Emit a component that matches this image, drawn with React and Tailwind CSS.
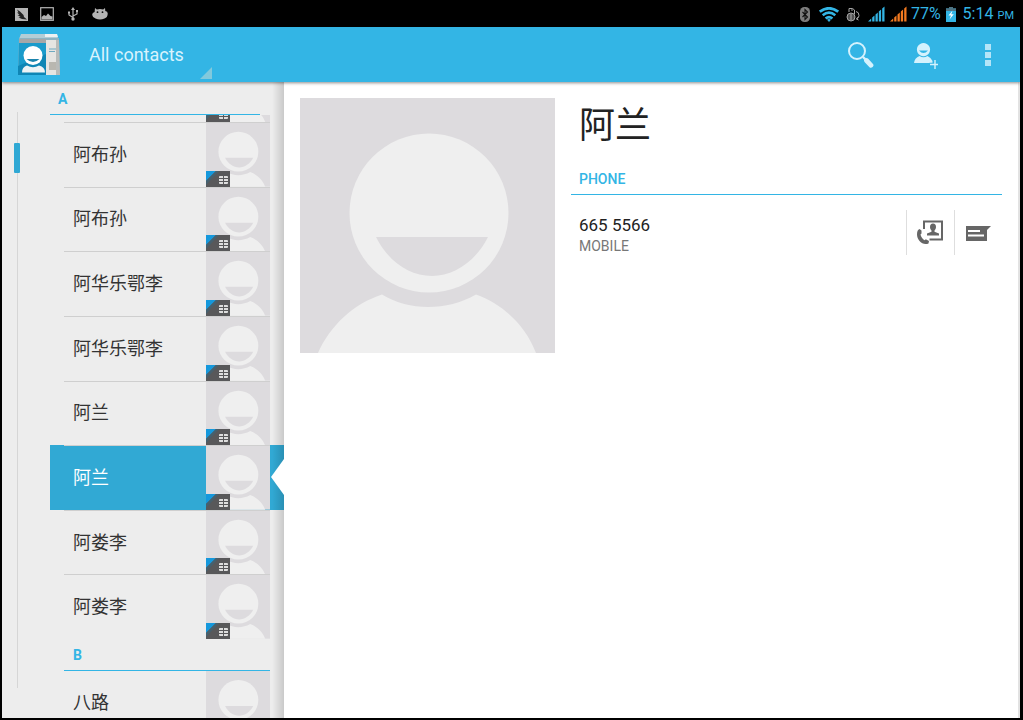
import { useState } from "react";

const groups = [
  {
    letter: "A",
    contacts: [
      { id: 1, name: "阿布孙" },
      { id: 2, name: "阿布孙" },
      { id: 3, name: "阿华乐鄂李" },
      { id: 4, name: "阿华乐鄂李" },
      { id: 5, name: "阿兰" },
      { id: 6, name: "阿兰" },
      { id: 7, name: "阿娄李" },
      { id: 8, name: "阿娄李" },
    ],
  },
  {
    letter: "B",
    contacts: [{ id: 9, name: "八路" }],
  },
];

function Avatar({ className }) {
  return (
    <svg
      viewBox="0 0 255 255"
      preserveAspectRatio="none"
      className={className}
      aria-hidden="true"
    >
      <rect width="255" height="255" fill="#dddbde" />
      <circle cx="129" cy="115" r="79.5" fill="#efefef" />
      <path d="M76 139H188C176 163 154 178 132 178C109 178 88 163 76 139Z" fill="#dddbde" />
      <path
        d="M18 255C30 228 53 206 82 196.500C96 205 112 209 128 209C145 209 161 205 176 196.500C203 206 226 228 236 255Z"
        fill="#efefef"
      />
    </svg>
  );
}

function SimBadge() {
  return (
    <svg
      viewBox="0 0 24 16"
      className="absolute bottom-0 left-0 h-4 w-6"
      aria-hidden="true"
    >
      <rect width="24" height="16" fill="#58585a" />
      <path d="M0 0H10L0 10Z" fill="#1598dc" />
      <path d="M10 0H13L0 14V10Z" fill="#46606e" />
      <rect x="13" y="5" width="9" height="8" rx="1" fill="#dedede" />
      <path d="M17.500 5V13M13 7.500H22M13 10.500H22" stroke="#58585a" strokeWidth="1" />
    </svg>
  );
}

function ContactPhoto() {
  return (
    <div className="relative h-full w-16 shrink-0">
      <Avatar className="h-full w-full" />
      <SimBadge />
    </div>
  );
}

function SignalIcon({ className }) {
  return (
    <svg viewBox="0 0 17 16" className={className} fill="currentColor" aria-hidden="true">
      <path d="M0 15.500L3.200 12.500V15.500ZM4.200 11.500L6.500 9.500V15.500H4.200ZM7.500 8.500L9.800 6.500V15.500H7.500ZM10.800 5.500L13.100 3.500V15.500H10.800ZM14.200 2.500L16.500 .5V15.500H14.200Z" />
    </svg>
  );
}

function StatusBar() {
  return (
    <div className="flex h-[27px] shrink-0 items-center justify-between bg-black pt-px pr-[9px] pl-[15px] text-[#33b5e5]">
      <div className="flex items-center gap-3 text-[#b4b4b4]">
        <svg viewBox="0 0 13 13" className="h-[13px] w-[13px]" aria-hidden="true">
          <rect width="13" height="13" fill="currentColor" />
          <path d="M2 1.500L5 3.500L8.500 7L9 9L12 11.500L7 11L3.500 9.500L5.500 9L2.500 7L4.500 6.800L2 4.500L3.500 4.500Z" fill="#222" />
        </svg>
        <svg viewBox="0 0 14 14" className="h-[14px] w-[14px]" aria-hidden="true">
          <rect x=".7" y=".7" width="12.600" height="12.600" fill="none" stroke="currentColor" strokeWidth="1.200" />
          <path d="M1.500 12.500V10L4 8L6 9L8 6.500L10.500 9L12.500 9.500V12.500Z" fill="currentColor" />
        </svg>
        <svg viewBox="0 0 14 14" className="h-[14px] w-[14px]" fill="none" stroke="currentColor" strokeWidth="1.200" aria-hidden="true">
          <path d="M7 2V12M7 10.500L3 8V6M7 9L11 7V4.500" />
          <path d="M7 0L9 3H5ZM2 4.500H4V6.500H2ZM10 3H12V5H10Z" fill="currentColor" stroke="none" />
          <circle cx="7" cy="12" r="1.700" fill="currentColor" stroke="none" />
        </svg>
        <svg viewBox="0 0 16 12" className="h-3 w-4" aria-hidden="true">
          <path
            d="M3 0L4.800 1.500Q8 .5 11.200 1.500L13 0L13.300 3Q16 3.500 15.700 6Q15.500 9.500 12.500 10.500Q8 12.500 3.500 10.500Q.5 9.500 .2 7Q0 4.500 2.600 4Z"
            fill="currentColor"
          />
          <circle cx="5.500" cy="4.200" r=".9" fill="#111" />
          <circle cx="10.500" cy="4.200" r=".9" fill="#111" />
        </svg>
      </div>

      <div className="flex items-center">
        <svg viewBox="0 0 10 15" className="h-[15px] w-[10px]" aria-hidden="true">
          <rect width="10" height="15" rx="4.500" fill="#7d7d7d" />
          <path d="M2.500 5L7.500 10L5 12.500V2.500L7.500 5L2.500 10" fill="none" stroke="#111" strokeWidth="1.100" />
        </svg>
        <svg viewBox="0 0 20 15" className="ml-[9px] h-[15px] w-5" fill="none" stroke="currentColor" strokeWidth="2.700" aria-hidden="true">
          <path d="M.8 4.700Q10-2.200 19.200 4.700M3.700 8.200Q10 3.200 16.300 8.200M6.600 11.500Q10 8.600 13.400 11.500" />
          <path d="M8 12.700Q10 11.500 12 12.700L10 15Z" fill="currentColor" stroke="none" />
        </svg>
        <svg viewBox="0 0 14 15" className="ml-[7px] h-[15px] w-[14px]" fill="none" stroke="#a5a5a5" strokeWidth="1" aria-hidden="true">
          <path d="M3 5V1.500H6.500L8.500 3V7M5 3H7" />
          <circle cx="5" cy="10" r="4" />
          <path d="M1 10H9M5 6V14M2 8H8M2 12H8M10 4.500Q13 5 13 8.500Q13 11 10.500 12M12 10L10.500 12L12.500 13" />
        </svg>
        <SignalIcon className="ml-2 h-4 w-[17px]" />
        <SignalIcon className="ml-[5px] h-4 w-[17px] text-[#f47a20]" />
        <span className="ml-1 text-base leading-6">77%</span>
        <svg viewBox="0 0 10 15" className="ml-[5px] h-[15px] w-[10px]" aria-hidden="true">
          <path d="M3 0H7V1.500H10V15H0V1.500H3Z" fill="currentColor" />
          <path d="M3 0H7V1.500H10V4H0V1.500H3Z" fill="#4e7484" />
          <path d="M6.500 3.500L2.500 8.500H5L3.500 12.500L7.800 7.300H5.300Z" fill="#fff" />
        </svg>
        <span className="ml-[7px] flex items-baseline gap-1 text-base leading-6">
          5:14 <span className="text-[11px] leading-4">PM</span>
        </span>
      </div>
    </div>
  );
}

function AppLogo() {
  return (
    <svg viewBox="0 0 42 42" className="h-[42px] w-[42px]" role="img" aria-label="People">
      <path d="M3 0H39L40 5H1Z" fill="#b4cdd6" />
      <path d="M27 0H39L40 3H27Z" fill="#eef1f2" />
      <path d="M1 4H41L42 41H0Z" fill="#8fb3c1" />
      <rect x="1" y="5" width="27" height="4" fill="#a5a7a8" />
      <path d="M28 6H38V41H28Z" fill="#e6e5e2" />
      <path d="M38 6H41L42 41H38Z" fill="#b9bbb9" />
      <path d="M31 15H38M31 17.500H37" stroke="#6fa9c0" strokeWidth="1.200" />
      <rect x="31" y="28" width="7" height="8" fill="#b9b7b0" />
      <path d="M1 9H28V41H0Z" fill="#1a9bcb" />
      <path d="M0 41V32L28 20V41Z" fill="#0f86b5" />
      <circle cx="15" cy="21.500" r="9.500" fill="#fff" />
      <path d="M8.500 25H21.500Q15 31 8.500 25Z" fill="#1b84ad" />
      <path d="M4 38.500Q4 33 9 31.500Q15 35 21 31.500Q27 33 27 38.500Z" fill="#eef3f5" />
    </svg>
  );
}

function ActionBar() {
  return (
    <header className="relative z-20 flex h-[55px] shrink-0 items-center bg-[#33b5e5] pl-4 shadow-[0_1px_3px_rgba(0,0,0,0.45)]">
      <AppLogo />

      <div className="relative ml-3 h-12 w-[140px]">
        <select
          aria-label="Contact filter"
          className="h-full w-full appearance-none bg-transparent pl-[17px] text-lg text-[#d9f3fd] outline-none"
        >
          <option>All contacts</option>
          <option>Favorites</option>
        </select>
        <svg
          viewBox="0 0 12 12"
          className="pointer-events-none absolute right-0 bottom-0 h-3 w-3"
          aria-hidden="true"
        >
          <path d="M12 0V12H0Z" fill="#82c9dc" />
        </svg>
      </div>

      <div className="ml-auto flex h-full text-[#d5f2fd]">
        <button type="button" aria-label="Search" className="flex w-16 items-center justify-center">
          <svg viewBox="0 0 28 28" className="h-7 w-7" fill="none" stroke="currentColor" aria-hidden="true">
            <circle cx="11" cy="10" r="8" strokeWidth="2" />
            <path d="M17 16L19.500 18.500" strokeWidth="2.400" />
            <path d="M20.500 19.500L25 24.300" strokeWidth="4.800" strokeLinecap="round" />
          </svg>
        </button>
        <button type="button" aria-label="Add contact" className="flex w-16 items-center justify-center">
          <svg viewBox="0 0 28 28" className="h-7 w-7" fill="currentColor" aria-hidden="true">
            <path d="M13.500 2A6.600 6.600 0 1 1 13.490 2ZM9 9.500Q13.500 14.500 18 9.500Z" fillRule="evenodd" />
            <path d="M4 22Q4.500 17 9.500 15Q13.500 17.500 17.500 15Q21.500 17 22.500 20V22Z" />
            <path d="M25 18V28M19.500 23.500H28" stroke="#33b5e5" strokeWidth="3.500" />
            <path d="M25 19V28M20 23.500H28" stroke="currentColor" strokeWidth="1.400" />
          </svg>
        </button>
        <button type="button" aria-label="More options" className="flex w-16 items-center justify-center">
          <svg viewBox="0 0 6 22" className="h-[22px] w-[6px] opacity-80" fill="currentColor" aria-hidden="true">
            <path d="M0 0H6V6H0ZM0 8H6V14H0ZM0 16H6V22H0Z" />
          </svg>
        </button>
      </div>
    </header>
  );
}

function ContactRow({ contact, selected, divided, onSelect }) {
  return (
    <li className="relative min-h-0">
      <button
        type="button"
        onClick={onSelect}
        aria-current={selected}
        className={
          selected
            ? "flex h-full w-full bg-[#31a9d4] pr-[14px] pl-[14px] text-left text-white"
            : "flex h-full w-full pr-[14px] pl-[14px] text-left text-[#333]"
        }
      >
        <span
          className={
            divided
              ? "flex h-full flex-1 items-center border-t border-[#cfcfcf]"
              : "flex h-full flex-1 items-center"
          }
        >
          <span className="flex-1 pl-[9px] text-lg leading-6">{contact.name}</span>
          <ContactPhoto />
        </span>
      </button>
      {selected && (
        <svg
          viewBox="0 0 13 36"
          className="absolute top-[14px] right-0 z-10 h-9 w-[13px]"
          aria-hidden="true"
        >
          <path d="M13 0V36L0 18Z" fill="#fff" />
        </svg>
      )}
    </li>
  );
}

function ContactList({ selectedId, onSelect }) {
  const [first, second] = groups;

  return (
    <aside className="relative flex w-[282px] shrink-0 overflow-hidden bg-[#ededed]">
      <div className="relative flex w-12 shrink-0 pt-[30px] pb-[30px] pl-[15px]">
        <div className="w-px bg-[#d6d6d6]" />
        <div className="absolute top-[61px] left-3 h-[30px] w-[6px] rounded-[1px] bg-[#2fa8d4]" />
      </div>

      <div className="min-w-0 flex-1">
        <h2 className="mr-6 h-[33px] border-b border-[#33b5e5] pl-2 text-sm leading-[34px] font-bold text-[#33b5e5]">
          {first.letter}
        </h2>

        {/* tail of the row scrolled under the pinned header */}
        <div className="flex h-[7px] items-end justify-end overflow-hidden pr-[14px]">
          <div className="h-16 w-16">
            <ContactPhoto />
          </div>
        </div>

        <ul className="grid h-[517px] auto-rows-fr">
          {first.contacts.map((contact) => (
            <ContactRow
              key={contact.id}
              contact={contact}
              divided
              selected={contact.id === selectedId}
              onSelect={() => onSelect(contact.id)}
            />
          ))}
        </ul>

        <h2 className="mr-[14px] ml-[14px] h-8 border-b border-[#33b5e5] pl-[9px] text-sm leading-8 font-bold text-[#33b5e5]">
          {second.letter}
        </h2>

        <ul className="grid auto-rows-[64px]">
          {second.contacts.map((contact) => (
            <ContactRow
              key={contact.id}
              contact={contact}
              selected={contact.id === selectedId}
              onSelect={() => onSelect(contact.id)}
            />
          ))}
        </ul>
      </div>

      <div className="pointer-events-none absolute inset-y-0 right-0 w-3 bg-linear-to-r from-transparent to-black/15" />
    </aside>
  );
}

function ContactDetail({ name }) {
  return (
    <main className="flex min-w-0 flex-1 items-start gap-4 border-r-2 border-[#e2e2e2] bg-white pt-4 pr-4 pl-4">
      <Avatar className="h-[255px] w-[255px] shrink-0" />

      <section className="min-w-0 flex-1">
        <h1 className="pl-2 text-4xl leading-14 text-[#222]">{name}</h1>

        <h2 className="mt-2.5 h-[31px] border-b border-[#33b5e5] pl-2 text-sm leading-[30px] font-medium text-[#33b5e5]">
          PHONE
        </h2>

        <div className="mt-[15px] flex h-[45px] items-center">
          <div className="flex-1 pt-0.5 pl-2">
            <p className="text-[17px] leading-6 text-[#222]">665 5566</p>
            <p className="text-sm leading-[18px] text-[#777]">MOBILE</p>
          </div>
          <button
            type="button"
            aria-label="Call"
            className="flex h-full w-12 items-center justify-center border-l border-[#dedede] text-[#666]"
          >
            <svg viewBox="0 0 28 28" className="h-7 w-7" aria-hidden="true">
              <path d="M7 10V2.500H25V20.500H12.500" fill="none" stroke="currentColor" strokeWidth="2" />
              <path
                d="M16 4.500C18 4.500 19 6 19 8C19 9.500 18.300 10.700 17.500 11.500V12.700L22 14.500V16.500H10V14.500L14.500 12.700V11.500C13.700 10.700 13 9.500 13 8C13 6 14 4.500 16 4.500Z"
                fill="currentColor"
              />
              <path
                d="M2.500 10L4.500 11.500L4.500 14.500L3.500 15.500C4 18 5.500 20 7.700 21.300L8.800 20.300L12 22L11.500 24.500C5.500 27 0 21 0 15.500C0 12.500 .8 10.500 2.500 10Z"
                fill="currentColor"
              />
            </svg>
          </button>
          <button
            type="button"
            aria-label="Send message"
            className="flex h-full w-12 items-center justify-center border-l border-[#dedede] text-[#666]"
          >
            <svg viewBox="0 0 25 16" className="h-4 w-[25px]" aria-hidden="true">
              <path d="M0 1H25L21 5V16H0Z" fill="currentColor" />
              <path d="M2 6H14M2 10.500H18" stroke="#fff" strokeWidth="1.800" />
            </svg>
          </button>
        </div>
      </section>
    </main>
  );
}

export default function App() {
  const [selectedId, setSelectedId] = useState(6);

  const selected = groups
    .flatMap((group) => group.contacts)
    .find((contact) => contact.id === selectedId);

  return (
    <div className="flex h-screen flex-col overflow-hidden bg-black font-['Roboto','Noto_Sans_CJK_SC',sans-serif]">
      <StatusBar />
      <div className="flex min-h-0 flex-1 flex-col pr-[3px] pb-[2px] pl-[2px]">
        <ActionBar />
        <div className="flex min-h-0 flex-1">
          <ContactList selectedId={selectedId} onSelect={setSelectedId} />
          <ContactDetail name={selected.name} />
        </div>
      </div>
    </div>
  );
}
